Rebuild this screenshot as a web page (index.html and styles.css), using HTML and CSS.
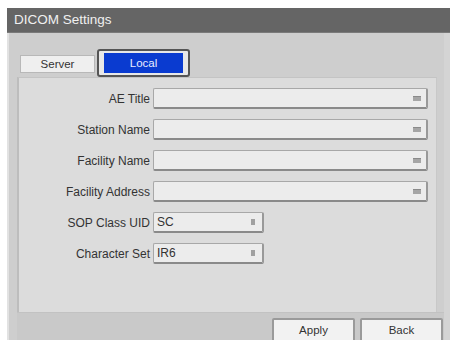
FILE: index.html
```html
<!DOCTYPE html>
<html>
<head>
<meta charset="utf-8">
<link rel="stylesheet" href="styles.css">
</head>
<body>
<div class="window">
  <div class="titlebar">DICOM Settings</div>
  <div class="content">
    <div class="tabs">
      <div class="tab">Server</div>
      <div class="tab-active-wrap"><div class="tab-active">Local</div></div>
    </div>
    <div class="panel">
      <div class="row"><div class="label">AE Title</div><div class="input wide"><span class="val"></span><span class="kbd"></span></div></div>
      <div class="row"><div class="label">Station Name</div><div class="input wide"><span class="val"></span><span class="kbd"></span></div></div>
      <div class="row"><div class="label">Facility Name</div><div class="input wide"><span class="val"></span><span class="kbd"></span></div></div>
      <div class="row"><div class="label">Facility Address</div><div class="input wide"><span class="val"></span><span class="kbd"></span></div></div>
      <div class="row"><div class="label">SOP Class UID</div><div class="input narrow"><span class="val">SC</span><span class="drop"></span></div></div>
      <div class="row"><div class="label">Character Set</div><div class="input narrow"><span class="val">IR6</span><span class="drop"></span></div></div>
    </div>
    <div class="footer">
      <div class="btn">Apply</div>
      <div class="btn">Back</div>
    </div>
  </div>
</div>
</body>
</html>
```
FILE: styles.css
```css
* { box-sizing: border-box; }
html, body { margin: 0; padding: 0; background: #ffffff; }
body { font-family: "Liberation Sans", Arial, sans-serif; overflow: hidden; }
.window {
  margin: 8px 0 0 7px;
  width: 443px;
  height: 340px;
  display: flex;
  flex-direction: column;
}
.titlebar {
  height: 25px;
  background: #656565;
  color: #f0f0f0;
  font-size: 13.5px;
  line-height: 24px;
  padding-left: 7px;
  border-bottom: 1px solid #7a7a7a;
}
.content {
  flex: 1;
  background: #cecece;
  border-left: 2px solid #e2e2e2;
  border-right: 6px solid #d4d4d4;
  display: flex;
  flex-direction: column;
  padding: 16px 0 0 8px;
}
.tabs {
  display: flex;
  align-items: flex-end;
  height: 28px;
  padding-left: 3px;
}
.tab {
  width: 75px;
  height: 18px;
  margin-bottom: 4px;
  background: #efefef;
  border: 1px solid #b8b8b8;
  font-size: 11.5px;
  line-height: 16px;
  text-align: center;
  color: #333;
}
.tab-active-wrap {
  margin-left: 2px;
  width: 93px;
  height: 28px;
  border: 2px solid #555;
  border-radius: 3px;
  background: #e8e8e8;
  padding: 2px 5px;
}
.tab-active {
  height: 20px;
  background: #0a3bd0;
  color: #e8ecff;
  font-size: 11.5px;
  line-height: 20px;
  text-align: center;
}
.panel {
  height: 235px;
  margin-right: 7px;
  background: #dcdcdc;
  border-left: 2px solid #bdbdbd;
  border-top: 1px solid #c4c4c4;
  border-right: 1px solid #c8c8c8;
  padding-top: 10px;
  display: flex;
  flex-direction: column;
  gap: 10px;
}
.row {
  display: flex;
  align-items: center;
  height: 21px;
}
.label {
  width: 134px;
  text-align: right;
  font-size: 12px;
  color: #333;
  padding-right: 3px;
}
.input {
  height: 21px;
  background: #ececec;
  border: 1px solid #a8a8a8;
  border-bottom: 2px solid #8a8a8a;
  border-right: 2px solid #999;
  border-radius: 2px;
  display: flex;
  align-items: center;
  padding: 0 5px 0 3px;
  font-size: 12px;
  color: #333;
}
.wide { width: 275px; }
.narrow { width: 111px; }
.val { flex: 1; }
.kbd {
  width: 8px;
  height: 5px;
  background: #a5a5a5;
  border-top: 1px solid #8a8a8a;
}
.drop {
  width: 4px;
  height: 6px;
  background: #a0a0a0;
  margin-right: 2px;
}
.footer {
  flex: 1;
  display: flex;
  justify-content: flex-end;
  align-items: flex-start;
  gap: 5px;
  padding-top: 5px;
  padding-right: 1px;
  border-top: 1px solid #c2c2c2;
  background: #c9c9c9;
}
.btn {
  width: 83px;
  height: 26px;
  background: #f2f2f2;
  border: 2px solid #9a9a9a;
  border-radius: 2px;
  font-size: 11.5px;
  color: #333;
  text-align: center;
  line-height: 20px;
}
```
